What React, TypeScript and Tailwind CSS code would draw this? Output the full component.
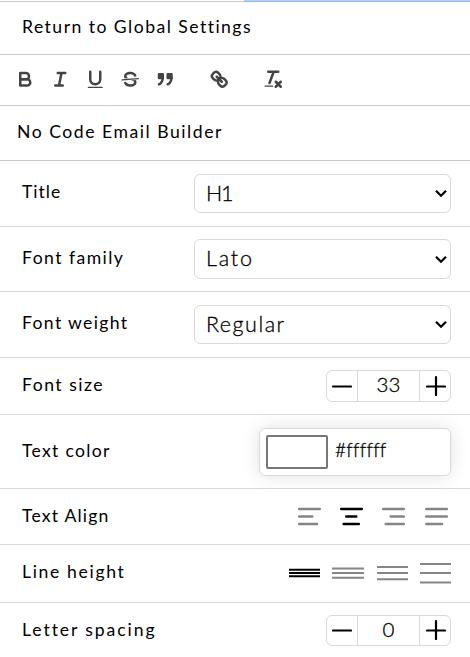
import type { ReactNode } from "react";

const label = "text-[17.6px] leading-[24px] whitespace-nowrap";

function Row({ text, height, tracking, pad = "pb-0", children }: { text: string; height: string; tracking: string; pad?: string; children?: ReactNode }) {
  return (
    <div className={`flex shrink-0 items-center justify-between border-b border-[#d9d9d9] pl-[22px] pr-[19px] ${height}`}>
      <span className={`${label} ${tracking} ${pad}`}>{text}</span>
      {children}
    </div>
  );
}

function SelectBox({ value, height = "h-[39px]", tracking }: { value: string; height?: string; tracking: string }) {
  return (
    <button className={`flex w-[257px] items-center justify-between rounded-md border border-[#d9d9d9] pl-[11px] pr-[3px] ${height}`}>
      <span className={`pb-[2px] text-[21.5px] leading-[28px] font-light [-webkit-text-stroke:0.3px_#000] ${tracking}`}>{value}</span>
      <svg width="12" height="9" viewBox="0 0 12 9" fill="none" stroke="#000" strokeWidth="2.2">
        <path d="M1 1.7 6 6.7 11 1.7" />
      </svg>
    </button>
  );
}

function Stepper({ value, height, pad }: { value: string; height: string; pad: string }) {
  return (
    <div className={`flex w-[125px] rounded-md border border-[#d9d9d9] ${height}`}>
      <button className="flex w-[30px] items-center justify-center">
        <svg width="20" height="20" viewBox="0 0 20 20" stroke="#000" strokeWidth="2.2" strokeLinecap="round"><path d="M1 10.5H19" /></svg>
      </button>
      <span className={`flex flex-1 items-center justify-center border-x border-[#d9d9d9] text-[20.5px] leading-none font-light [-webkit-text-stroke:0.3px_#000] ${pad}`}>{value}</span>
      <button className="flex w-[30px] items-center justify-center pl-px">
        <svg width="20" height="20" viewBox="0 0 20 20" stroke="#000" strokeWidth="2.2" strokeLinecap="round"><path d="M1 10.5H19M10 1.2V19" /></svg>
      </button>
    </div>
  );
}

function ToolIcon({ children }: { children: ReactNode }) {
  return (
    <button className="flex w-[35px] shrink-0 justify-center">
      <svg width="22.5" height="22.5" viewBox="0 0 18 18" fill="none" stroke="#444" strokeWidth="2" strokeLinecap="round" strokeLinejoin="round">
        {children}
      </svg>
    </button>
  );
}

function Toolbar() {
  return (
    <div className="flex h-[51px] shrink-0 items-center border-b border-[#c9c9c9] pb-px pl-2">
      <ToolIcon>
        <path d="M5,4H9.5A2.5,2.5,0,0,1,12,6.5v0A2.5,2.5,0,0,1,9.5,9H5V4Z" />
        <path d="M5,9h5.5A2.5,2.5,0,0,1,13,11.5v0A2.5,2.5,0,0,1,10.5,14H5V9Z" />
      </ToolIcon>
      <ToolIcon>
        <path d="M7 4H13M5 14H11M8 14 10 4" />
      </ToolIcon>
      <ToolIcon>
        <path d="M5,3V9a4.012,4.012,0,0,0,4,4H9a4.012,4.012,0,0,0,4-4V3" />
        <rect fill="#444" stroke="none" x="3" y="15" width="12" height="1" rx="0.5" />
      </ToolIcon>
      <ToolIcon>
        <path strokeWidth="1" d="M15.5 8.5 2.5 9.5" />
        <g fill="#444" stroke="none">
          <path d="M9.007,8C6.542,7.791,6,7.519,6,6.5,6,5.792,7.283,5,9,5c1.571,0,2.765.679,2.969,1.309a1,1,0,0,0,1.9-.617C13.356,4.106,11.354,3,9,3,6.2,3,4,4.538,4,6.5a3.2,3.2,0,0,0,.5,1.843Z" />
          <path d="M8.984,10C11.457,10.208,12,10.479,12,11.5c0,0.708-1.283,1.5-3,1.5-1.571,0-2.765-.679-2.969-1.309a1,1,0,1,0-1.9.617C4.644,13.894,6.646,15,9,15c2.8,0,5-1.538,5-3.5a3.2,3.2,0,0,0-.5-1.843Z" />
        </g>
      </ToolIcon>
      <ToolIcon>
        <g fill="#444">
          <rect x="4" y="5" width="3" height="3" />
          <rect x="11" y="5" width="3" height="3" />
          <path d="M7,8c0,4.031-3,5-3,5" />
          <path d="M14,8c0,4.031-3,5-3,5" />
        </g>
      </ToolIcon>
      <div className="w-[18.75px]" />
      <ToolIcon>
        <path d="M7 7 11 11" />
        <path d="M8.9,4.577a3.476,3.476,0,0,1,.36,4.679A3.476,3.476,0,0,1,4.577,8.9C3.185,7.5,2.035,6.4,4.217,4.217S7.5,3.185,8.9,4.577Z" />
        <path d="M13.423,9.1a3.476,3.476,0,0,0-4.679-.36,3.476,3.476,0,0,0,.36,4.679c1.392,1.392,2.5,2.542,4.679.36S14.815,10.5,13.423,9.1Z" />
      </ToolIcon>
      <div className="w-[18.75px]" />
      <ToolIcon>
        <path d="M5 3H13M6 12 9.35 3M11 11 15 15M15 11 11 15" />
        <rect fill="#444" stroke="none" x="2" y="14" width="7" height="1" rx="0.5" />
      </ToolIcon>
    </div>
  );
}

const aligns = [
  { d: "M1.2 3H21.8M1.2 10.5H14.3M1.2 18H19", active: false },
  { d: "M1.2 3H21.8M6.2 10.5H16.3M3.7 18H18.8", active: true },
  { d: "M1.2 3H21.8M8.7 10.5H21.8M3.7 18H21.8", active: false },
  { d: "M1.2 3H21.8M1.2 10.5H21.8M1.2 18H17", active: false },
];

const spacings = [
  { d: "M0 8.8H31M0 12H31M0 15.2H31", active: true },
  { d: "M0 7.4H32M0 12H32M0 16.7H32", active: false },
  { d: "M0 6H31M0 12.1H31M0 18.3H31", active: false },
  { d: "M0 3H31M0 12.1H31M0 21.4H31", active: false },
];

export default function App() {
  return (
    <div className="flex h-[657px] w-[470px] flex-col overflow-hidden bg-white font-['Lato',sans-serif] text-black">
      <div className="flex h-0.5 shrink-0">
        <div className="w-[244px] border-b border-[#c9c9c9]" />
        <div className="flex-1 border-b border-[#94b4e3] bg-[#b5d2fb]" />
      </div>
      <div className="flex h-[53px] shrink-0 items-center border-b border-[#c9c9c9] pl-[22px] pb-[3px]">
        <span className={`${label} tracking-[1.46px]`}>Return to Global Settings</span>
      </div>
      <Toolbar />
      <div className="flex h-[55px] shrink-0 items-center border-b border-[#c9c9c9] pl-[17px] pb-[2px]">
        <span className={`${label} tracking-[1.53px]`}>No Code Email Builder</span>
      </div>
      <Row text="Title" height="h-[66px]" tracking="tracking-[1px]" pad="pb-[4px]">
        <SelectBox value="H1" tracking="tracking-[-1.2px]" />
      </Row>
      <Row text="Font family" height="h-[65px]" tracking="tracking-[1.45px]" pad="pb-[3px]">
        <SelectBox value="Lato" height="h-10" tracking="tracking-[1.8px]" />
      </Row>
      <Row text="Font weight" height="h-[66px]" tracking="tracking-[1.35px]" pad="pb-[4px]">
        <SelectBox value="Regular" tracking="tracking-[1.5px]" />
      </Row>
      <Row text="Font size" height="h-[57px]" tracking="tracking-[1.5px]" pad="pb-[2px]">
        <Stepper value="33" height="h-8" pad="pb-[4px]" />
      </Row>
      <Row text="Text color" height="h-[74px]" tracking="tracking-[1.3px]" pad="pb-[2px]">
        <div className="flex h-12 w-[192px] items-center rounded-md border border-[#d9d9d9] bg-white pl-1.5 shadow-[0_0_18px_rgba(0,0,0,0.12)]">
          <div className="h-[34px] w-[62px] rounded-xs border-2 border-[#767676]" />
          <span className="pb-[4px] pl-[7px] text-[19px] leading-none font-light tracking-[0.25px] [-webkit-text-stroke:0.3px_#000]">#ffffff</span>
        </div>
      </Row>
      <Row text="Text Align" height="h-[56px]" tracking="tracking-[1.2px]" pad="pb-[2px]">
        <div className="flex gap-[19.3px] pr-[3.3px]">
          {aligns.map((a) => (
            <svg key={a.d} width="23" height="21" viewBox="0 0 23 21" stroke={a.active ? "#000" : "#858585"} strokeWidth="2.5" strokeLinecap="round">
              <path d={a.d} />
            </svg>
          ))}
        </div>
      </Row>
      <Row text="Line height" height="h-[58px]" tracking="tracking-[1.65px]" pad="pb-[4px]">
        <div className="flex gap-[12.5px] pb-[1.5px]">
          {spacings.map((s, i) => (
            <svg key={s.d} width={i === 1 ? 32 : 31} height="24" viewBox={i === 1 ? "0 0 32 24" : "0 0 31 24"} stroke={s.active ? "#000" : "#858585"} strokeWidth="2">
              <path d={s.d} />
            </svg>
          ))}
        </div>
      </Row>
      <div className="flex h-[54px] shrink-0 items-center justify-between pl-[22px] pr-[19px]">
        <span className={`${label} tracking-[1.9px]`}>Letter spacing</span>
        <Stepper value="0" height="h-[31px]" pad="pb-[2px]" />
      </div>
    </div>
  );
}
